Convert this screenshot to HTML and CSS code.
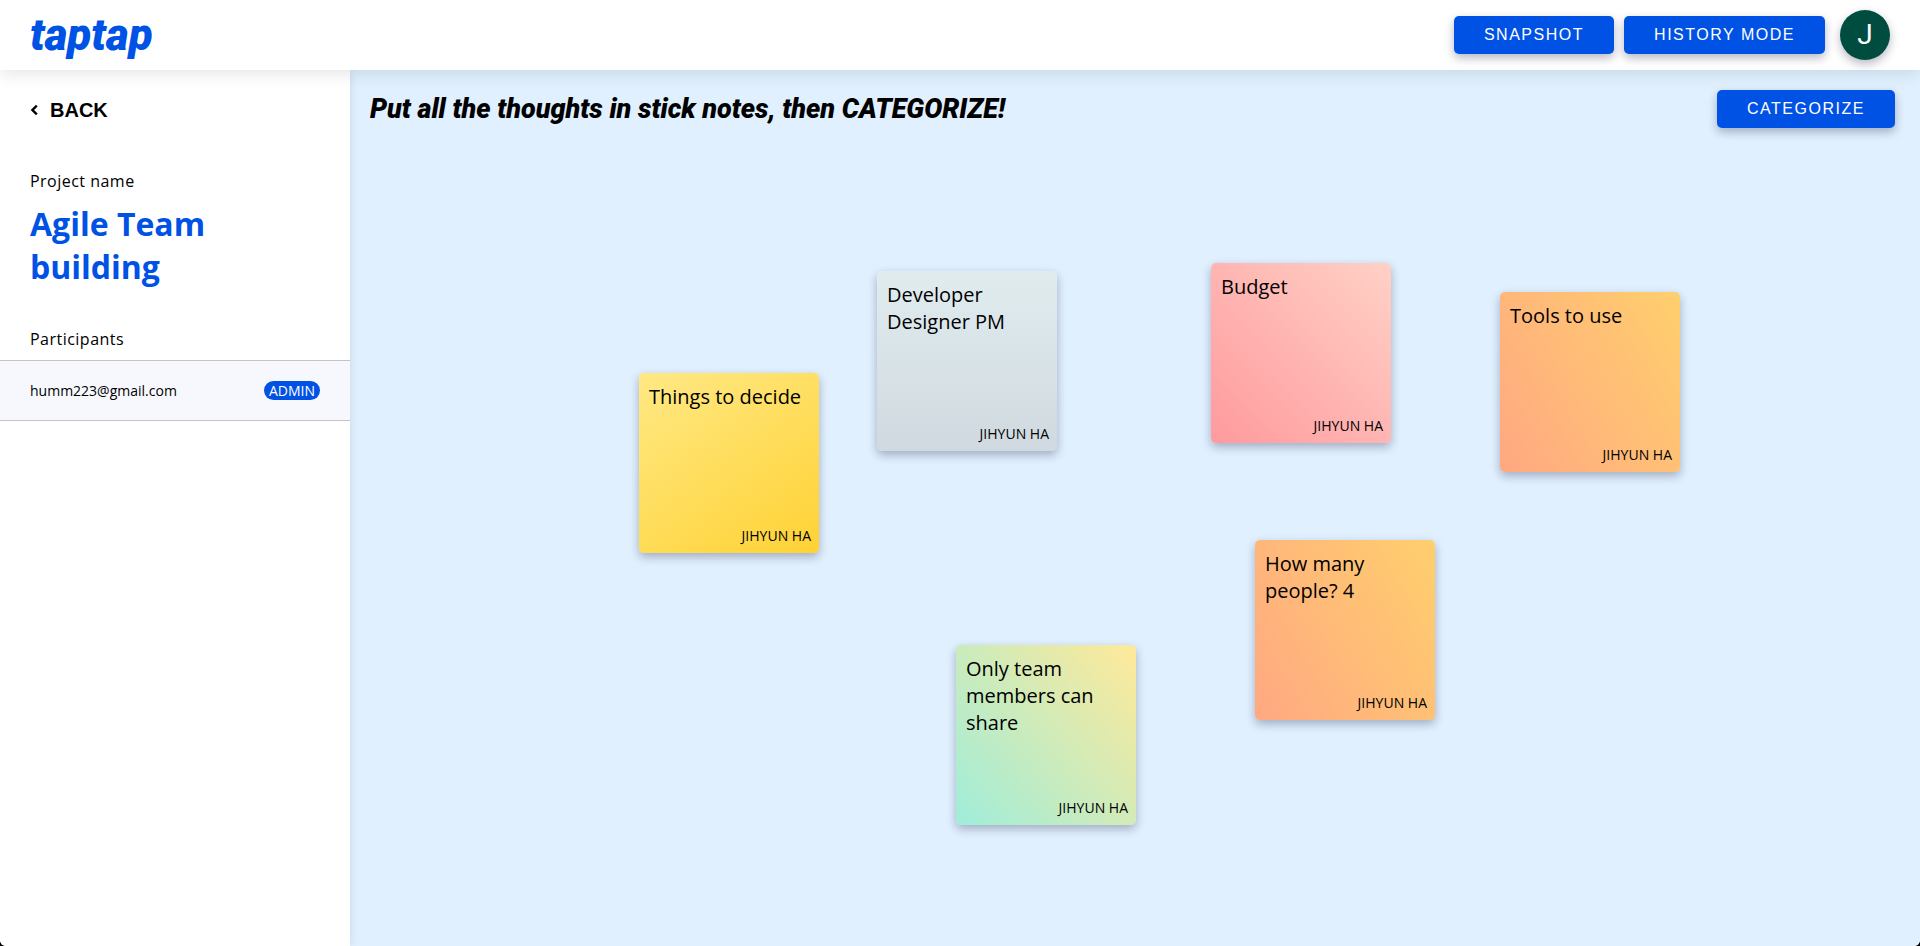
FILE: index.html
```html
<!DOCTYPE html>
<html lang="en">
<head>
<meta charset="utf-8">
<meta name="viewport" content="width=device-width, initial-scale=1">
<title>taptap</title>
<link rel="stylesheet" href="styles.css">
</head>
<body>
<div class="app">
  <header class="topbar">
    <a class="logo" href="#">taptap</a>
    <div class="topbar-actions">
      <button class="button" type="button">SNAPSHOT</button>
      <button class="button" type="button">HISTORY MODE</button>
      <button class="avatar" type="button" aria-label="Account">J</button>
    </div>
  </header>
  <div class="workspace">
    <aside class="sidebar">
      <a class="back" href="#">
        <svg class="back-icon" viewBox="0 0 8 12" aria-hidden="true"><path d="M6.8 1.6 2.4 6l4.4 4.4"/></svg>
        BACK
      </a>
      <section class="project">
        <p class="label">Project name</p>
        <h1 class="project-name">Agile Team building</h1>
      </section>
      <section>
        <h2 class="label participants-label">Participants</h2>
        <ul class="participants">
          <li class="participant">
            <span>humm223@gmail.com</span>
            <span class="badge">ADMIN</span>
          </li>
        </ul>
      </section>
    </aside>
    <main class="board">
      <div class="board-head">
        <h2 class="board-title">Put all the thoughts in stick notes, then CATEGORIZE!</h2>
        <button class="button" type="button">CATEGORIZE</button>
      </div>
      <article class="note note-yellow note-things">
        <p class="note-text">Things to decide</p>
        <p class="note-author">JIHYUN HA</p>
      </article>
      <article class="note note-grey note-roles">
        <p class="note-text">Developer Designer PM</p>
        <p class="note-author">JIHYUN HA</p>
      </article>
      <article class="note note-pink note-budget">
        <p class="note-text">Budget</p>
        <p class="note-author">JIHYUN HA</p>
      </article>
      <article class="note note-orange note-tools">
        <p class="note-text">Tools to use</p>
        <p class="note-author">JIHYUN HA</p>
      </article>
      <article class="note note-orange note-people">
        <p class="note-text">How many people? 4</p>
        <p class="note-author">JIHYUN HA</p>
      </article>
      <article class="note note-green note-share">
        <p class="note-text">Only team members can share</p>
        <p class="note-author">JIHYUN HA</p>
      </article>
    </main>
  </div>
</div>
</body>
</html>
```

FILE: styles.css
```css
:root {
  --blue: #0052e5;
  --display: Roboto, "Open Sans", sans-serif;
  --control: "Liberation Sans", Arial, sans-serif;
}

* {
  box-sizing: border-box;
}

html {
  background: #000;
}

body {
  margin: 0;
  font-family: "Open Sans", "Noto Sans", sans-serif;
  color: #000;
}

h1, h2, p, ul {
  margin: 0;
  padding: 0;
}

.app {
  display: flex;
  flex-direction: column;
  min-height: 100vh;
  background: #fff;
  border-radius: 0 0 6px 6px;
  overflow: hidden;
}

.topbar {
  position: relative;
  z-index: 2;
  display: flex;
  align-items: center;
  justify-content: space-between;
  padding: 10px 30px;
  background: #fff;
  box-shadow: 0 4px 16px rgba(0, 0, 0, 0.1);
}

.logo {
  font: italic 900 44px/48px var(--display);
  color: var(--blue);
  text-decoration: none;
}

.topbar-actions {
  display: flex;
  align-items: center;
  gap: 10px;
}

.button {
  padding: 10px 30px;
  border: 0;
  border-radius: 5px;
  background: var(--blue);
  color: #fff;
  font: 16px/18px var(--control);
  letter-spacing: 0.095em;
  white-space: nowrap;
  box-shadow: 0 4px 10px rgba(20, 20, 60, 0.3);
}

.avatar {
  width: 50px;
  height: 50px;
  margin-left: 5px;
  padding: 0;
  border: 0;
  border-radius: 50%;
  background: #004d40;
  color: #fff;
  font: 28px/50px Roboto, sans-serif;
  box-shadow: 0 4px 10px rgba(20, 20, 60, 0.3);
}

.workspace {
  flex: 1;
  display: flex;
}

.sidebar {
  position: relative;
  z-index: 1;
  flex: 0 0 350px;
  background: #fff;
  box-shadow: 0 0 10px rgba(0, 0, 0, 0.1);
}

.back {
  display: flex;
  align-items: center;
  gap: 12px;
  padding: 28px 30px 0;
  font: bold 20px/24px var(--control);
  color: #000;
  text-decoration: none;
}

.back-icon {
  width: 8px;
  height: 12px;
  fill: none;
  stroke: #000;
  stroke-width: 2.4;
}

.project {
  padding: 48px 30px 40px;
}

.label {
  font-size: 16px;
  line-height: 22px;
  font-weight: 400;
  letter-spacing: 0.03em;
}

.project-name {
  margin-top: 10px;
  font-size: 32px;
  line-height: 43px;
  color: var(--blue);
}

.participants-label {
  padding: 0 30px;
}

.participants {
  margin-top: 10px;
  list-style: none;
}

.participant {
  display: flex;
  align-items: center;
  justify-content: space-between;
  padding: 20px 30px;
  border: solid #c4c4c8;
  border-width: 1px 0;
  background: #f7f8fe;
  font-size: 14px;
  line-height: 19px;
}

.badge {
  padding: 0 5px;
  border-radius: 10px;
  background: var(--blue);
  color: #fff;
}

.board {
  position: relative;
  flex: 1;
  background: #e0f0fe;
}

.board-head {
  display: flex;
  align-items: center;
  justify-content: space-between;
  padding: 20px 25px 20px 20px;
}

.board-title {
  font: italic 900 27px/38px var(--display);
}

.note {
  position: absolute;
  display: flex;
  flex-direction: column;
  justify-content: space-between;
  width: 180px;
  height: 180px;
  padding: 10px 8px 8px 10px;
  border-radius: 5px;
  box-shadow: 0 4px 10px rgba(20, 20, 60, 0.3);
}

.note-text {
  font-size: 20px;
  line-height: 27px;
}

.note-author {
  font-size: 14px;
  line-height: 19px;
  text-align: right;
}

.note-yellow { background: linear-gradient(145deg, #ffe985, #ffd234); }
.note-grey { background: linear-gradient(to top, #cfd9df, #e1ecef); }
.note-pink { background: linear-gradient(45deg, #ff9a9e, #ffd1c6); }
.note-orange { background: linear-gradient(60deg, #ffa882, #ffcf6d); }
.note-green { background: linear-gradient(50deg, #9fedda, #ffe999); }

.note-things { left: 289px; top: 303px; }
.note-roles { left: 527px; top: 201px; }
.note-budget { left: 861px; top: 193px; }
.note-tools { left: 1150px; top: 222px; }
.note-people { left: 905px; top: 470px; }
.note-share { left: 606px; top: 575px; }
```
